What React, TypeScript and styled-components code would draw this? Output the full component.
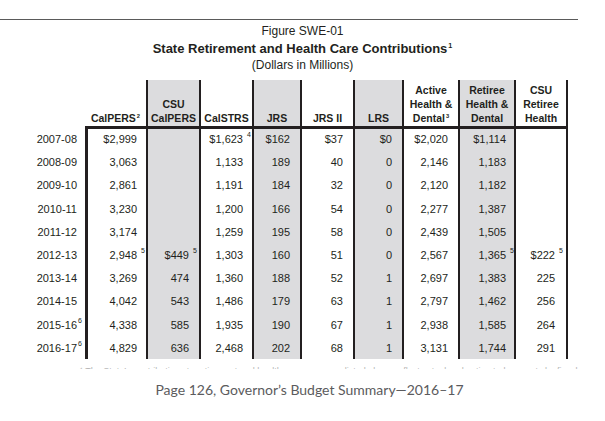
import React from 'react';
import styled, { createGlobalStyle } from 'styled-components';

const GlobalStyle = createGlobalStyle`
  html, body { margin: 0; padding: 0; background: #ffffff; }
  body { font-family: "Liberation Sans", Arial, sans-serif; color: #231f20; }
`;

const Page = styled.div`
  width: 605px;
  height: 421px;
  overflow: hidden;
  padding-top: 19px;
  box-sizing: border-box;
`;

const Rule = styled.div`
  width: 578px;
  height: 1px;
  background: #5a5a5a;
`;

const TitleBlock = styled.div`
  margin-top: 3px;
  text-align: center;
  line-height: 17px;
`;

const FigureLabel = styled.div`
  font-size: 12px;
`;

const Title = styled.div`
  font-size: 13px;
  font-weight: bold;
`;

const Subtitle = styled.div`
  font-size: 12px;
`;

const Sup = styled.sup`
  font-size: 0.55em;
  line-height: 0;
  vertical-align: 0.75em;
  margin-left: 1px;
`;

const Table = styled.div`
  margin-top: 6px;
  display: grid;
  grid-template-columns: 85px 63px 53px 53px 48px 53px 49px 56px 56px 52px;
  grid-template-rows: 49px repeat(9, 23.2px) 21px;
`;

const Corner = styled.div``;

const HeadCell = styled.div<{ $shaded?: boolean }>`
  box-sizing: border-box;
  background: ${(p) => (p.$shaded ? '#dcdcde' : 'transparent')};
  border-right: 2px solid #231f20;
  border-bottom: 3px solid #231f20;
  display: flex;
  flex-direction: column;
  justify-content: flex-end;
  align-items: center;
  text-align: center;
  padding-bottom: 1px;
  font-size: 10.5px;
  font-weight: bold;
  line-height: 14px;
  white-space: nowrap;
`;

const YearCell = styled.div`
  box-sizing: border-box;
  text-align: right;
  padding-right: 8px;
  font-size: 11px;
  line-height: 20px;
  white-space: nowrap;
`;

const DataCell = styled.div<{ $shaded?: boolean; $first?: boolean; $pad: number }>`
  box-sizing: border-box;
  background: ${(p) => (p.$shaded ? '#dcdcde' : 'transparent')};
  border-right: 2px solid #231f20;
  border-left: ${(p) => (p.$first ? '3px solid #231f20' : 'none')};
  text-align: right;
  padding-right: ${(p) => p.$pad}px;
  font-size: 11px;
  line-height: 20px;
  white-space: nowrap;
`;

const Value = styled.span`
  position: relative;
  display: inline-block;
`;

const Note = styled.span<{ $gap: number }>`
  position: absolute;
  left: 100%;
  top: 0;
  margin-left: ${(p) => p.$gap}px;
  font-size: 7px;
  line-height: 12px;
`;

const FootnoteStrip = styled.div`
  margin-top: 6px;
  height: 4px;
  overflow: hidden;
  padding-left: 80px;
  font-size: 9px;
  line-height: 12px;
  color: #b4b4b4;
  white-space: nowrap;
`;

const Footer = styled.div`
  margin-top: 12px;
  text-align: center;
  padding-left: 14px;
  font-family: Lato, "Open Sans", sans-serif;
  font-size: 14px;
  line-height: 18px;
  color: #5b5b5d;
`;

type Col = {
  head: React.ReactNode[];
  shaded: boolean;
  pad: number;
  values: [string, string?][];
};

const columns: Col[] = [
  {
    head: [<>CalPERS<Sup>2</Sup></>],
    shaded: false,
    pad: 9,
    values: [['$2,999'], ['3,063'], ['2,861'], ['3,230'], ['3,174'], ['2,948', '5'], ['3,269'], ['4,042'], ['4,338'], ['4,829']],
  },
  {
    head: ['CSU', 'CalPERS'],
    shaded: true,
    pad: 10,
    values: [[''], [''], [''], [''], [''], ['$449', '5'], ['474'], ['543'], ['585'], ['636']],
  },
  {
    head: ['CalSTRS'],
    shaded: false,
    pad: 9,
    values: [['$1,623', '4'], ['1,133'], ['1,191'], ['1,200'], ['1,259'], ['1,303'], ['1,360'], ['1,486'], ['1,935'], ['2,468']],
  },
  {
    head: ['JRS'],
    shaded: true,
    pad: 10,
    values: [['$162'], ['189'], ['184'], ['166'], ['195'], ['160'], ['188'], ['179'], ['190'], ['202']],
  },
  {
    head: ['JRS II'],
    shaded: false,
    pad: 10,
    values: [['$37'], ['40'], ['32'], ['54'], ['58'], ['51'], ['52'], ['63'], ['67'], ['68']],
  },
  {
    head: ['LRS'],
    shaded: true,
    pad: 10,
    values: [['$0'], ['0'], ['0'], ['0'], ['0'], ['0'], ['1'], ['1'], ['1'], ['1']],
  },
  {
    head: ['Active', 'Health &', <>Dental<Sup>3</Sup></>],
    shaded: false,
    pad: 10,
    values: [['$2,020'], ['2,146'], ['2,120'], ['2,277'], ['2,439'], ['2,567'], ['2,697'], ['2,797'], ['2,938'], ['3,131']],
  },
  {
    head: ['Retiree', 'Health &', 'Dental'],
    shaded: true,
    pad: 8,
    values: [['$1,114'], ['1,183'], ['1,182'], ['1,387'], ['1,505'], ['1,365', '5'], ['1,383'], ['1,462'], ['1,585'], ['1,744']],
  },
  {
    head: ['CSU', 'Retiree', 'Health'],
    shaded: false,
    pad: 11,
    values: [[''], [''], [''], [''], [''], ['$222', '5'], ['225'], ['256'], ['264'], ['291']],
  },
];

const years: [string, string?][] = [
  ['2007-08'],
  ['2008-09'],
  ['2009-10'],
  ['2010-11'],
  ['2011-12'],
  ['2012-13'],
  ['2013-14'],
  ['2014-15'],
  ['2015-16', '6'],
  ['2016-17', '6'],
];

export default function App() {
  return (
    <Page>
      <GlobalStyle />
      <Rule />
      <TitleBlock>
        <FigureLabel>Figure SWE-01</FigureLabel>
        <Title>
          State Retirement and Health Care Contributions<Sup>1</Sup>
        </Title>
        <Subtitle>(Dollars in Millions)</Subtitle>
      </TitleBlock>
      <Table>
        <Corner />
        {columns.map((c, i) => (
          <HeadCell key={`h${i}`} $shaded={c.shaded}>
            {c.head.map((line, j) => (
              <div key={j}>{line}</div>
            ))}
          </HeadCell>
        ))}
        {years.map(([year, yNote], r) => (
          <React.Fragment key={year}>
            <YearCell>
              <Value>
                {year}
                {yNote && <Note $gap={1}>{yNote}</Note>}
              </Value>
            </YearCell>
            {columns.map((c, i) => {
              const [v, n] = c.values[r];
              return (
                <DataCell key={i} $shaded={c.shaded} $first={i === 0} $pad={c.pad}>
                  {v && (
                    <Value>
                      {v}
                      {n && <Note $gap={4}>{n}</Note>}
                    </Value>
                  )}
                </DataCell>
              );
            })}
          </React.Fragment>
        ))}
      </Table>
      <FootnoteStrip>
        ¹ The State’s contributions to retirement and health care programs listed above reflect actual and estimated amounts by fiscal year.
      </FootnoteStrip>
      <Footer>Page 126, Governor’s Budget Summary—2016–17</Footer>
    </Page>
  );
}
